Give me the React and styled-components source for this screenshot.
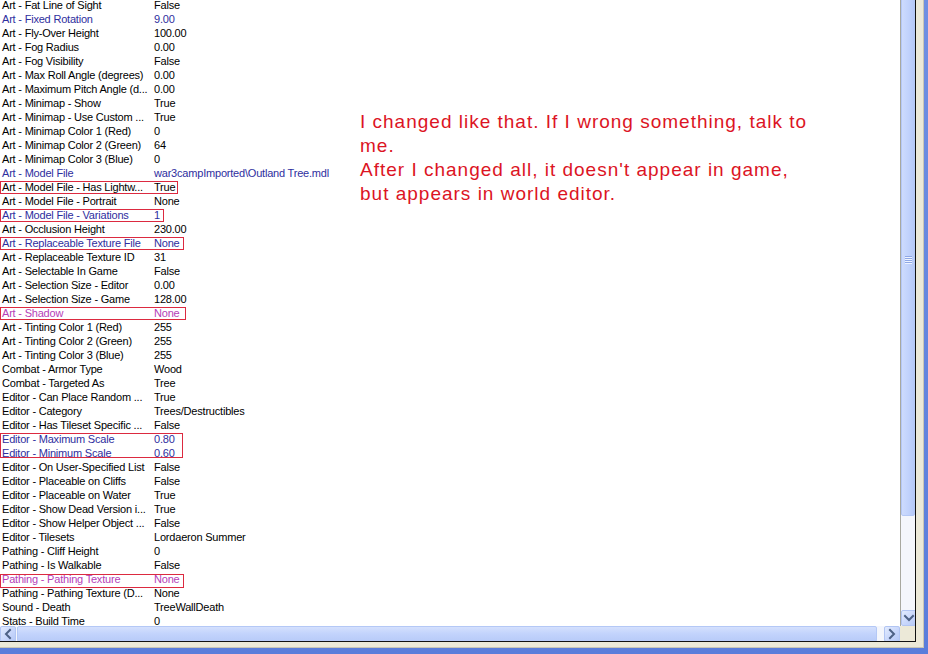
import React from 'react'
import styled, { createGlobalStyle } from 'styled-components'

const GlobalStyle = createGlobalStyle`
  html, body {
    margin: 0;
    padding: 0;
    background: #ffffff;
    overflow: hidden;
  }
`

const rows = [
  { label: 'Art - Fat Line of Sight', value: 'False' },
  { label: 'Art - Fixed Rotation', value: '9.00', tone: 'blue' },
  { label: 'Art - Fly-Over Height', value: '100.00' },
  { label: 'Art - Fog Radius', value: '0.00' },
  { label: 'Art - Fog Visibility', value: 'False' },
  { label: 'Art - Max Roll Angle (degrees)', value: '0.00' },
  { label: 'Art - Maximum Pitch Angle (d...', value: '0.00' },
  { label: 'Art - Minimap - Show', value: 'True' },
  { label: 'Art - Minimap - Use Custom ...', value: 'True' },
  { label: 'Art - Minimap Color 1 (Red)', value: '0' },
  { label: 'Art - Minimap Color 2 (Green)', value: '64' },
  { label: 'Art - Minimap Color 3 (Blue)', value: '0' },
  { label: 'Art - Model File', value: 'war3campImported\\Outland Tree.mdl', tone: 'blue' },
  { label: 'Art - Model File - Has Lightw...', value: 'True', mark: { w: 178, h: 13 } },
  { label: 'Art - Model File - Portrait', value: 'None' },
  { label: 'Art - Model File - Variations', value: '1', tone: 'blue', mark: { w: 164, h: 13 } },
  { label: 'Art - Occlusion Height', value: '230.00' },
  { label: 'Art - Replaceable Texture File', value: 'None', tone: 'blue', mark: { w: 184, h: 13 } },
  { label: 'Art - Replaceable Texture ID', value: '31' },
  { label: 'Art - Selectable In Game', value: 'False' },
  { label: 'Art - Selection Size - Editor', value: '0.00' },
  { label: 'Art - Selection Size - Game', value: '128.00' },
  { label: 'Art - Shadow', value: 'None', tone: 'purple', mark: { w: 186, h: 13 } },
  { label: 'Art - Tinting Color 1 (Red)', value: '255' },
  { label: 'Art - Tinting Color 2 (Green)', value: '255' },
  { label: 'Art - Tinting Color 3 (Blue)', value: '255' },
  { label: 'Combat - Armor Type', value: 'Wood' },
  { label: 'Combat - Targeted As', value: 'Tree' },
  { label: 'Editor - Can Place Random ...', value: 'True' },
  { label: 'Editor - Category', value: 'Trees/Destructibles' },
  { label: 'Editor - Has Tileset Specific ...', value: 'False' },
  { label: 'Editor - Maximum Scale', value: '0.80', tone: 'blue', mark: { w: 183, h: 25 } },
  { label: 'Editor - Minimum Scale', value: '0.60', tone: 'blue' },
  { label: 'Editor - On User-Specified List', value: 'False' },
  { label: 'Editor - Placeable on Cliffs', value: 'False' },
  { label: 'Editor - Placeable on Water', value: 'True' },
  { label: 'Editor - Show Dead Version i...', value: 'True' },
  { label: 'Editor - Show Helper Object ...', value: 'False' },
  { label: 'Editor - Tilesets', value: 'Lordaeron Summer' },
  { label: 'Pathing - Cliff Height', value: '0' },
  { label: 'Pathing - Is Walkable', value: 'False' },
  { label: 'Pathing - Pathing Texture', value: 'None', tone: 'purple', mark: { w: 184, h: 14, top: 2 } },
  { label: 'Pathing - Pathing Texture (D...', value: 'None' },
  { label: 'Sound - Death', value: 'TreeWallDeath' },
  { label: 'Stats - Build Time', value: '0' },
]

const tones = {
  blue: '#2e2e9e',
  purple: '#b540b8',
}

const Chevron = ({ dir }) => {
  const paths = {
    down: 'M3 5 L7 9 L11 5',
    left: 'M9 3 L5 7 L9 11',
    right: 'M5 3 L9 7 L5 11',
  }
  return (
    <svg width="14" height="14" viewBox="0 0 14 14">
      <path d={paths[dir]} fill="none" stroke="#4d6185" strokeWidth="2" strokeLinecap="square" />
    </svg>
  )
}

const App = () => {
  return (
    <>
      <GlobalStyle />
      <Window>
        <Client>
          <ListView>
            <Content>
              <PropertyList>
                {rows.map((r) => (
                  <Row key={r.label} $tone={r.tone} $mark={r.mark}>
                    <Label>{r.label}</Label>
                    <Value>{r.value}</Value>
                  </Row>
                ))}
              </PropertyList>
              <Note>
                I changed like that. If I wrong something, talk to me.
                <br />
                After I changed all, it doesn't appear in game, but appears in world editor.
              </Note>
            </Content>
            <VScroll>
              <VThumb>
                <Grip />
              </VThumb>
              <Track />
              <ScrollButton>
                <Chevron dir="down" />
              </ScrollButton>
            </VScroll>
            <HScroll>
              <ScrollButton>
                <Chevron dir="left" />
              </ScrollButton>
              <HThumb />
              <Track />
              <ScrollButton>
                <Chevron dir="right" />
              </ScrollButton>
            </HScroll>
            <Corner />
          </ListView>
        </Client>
      </Window>
    </>
  )
}

const Window = styled.div`
  width: 928px;
  height: 654px;
  display: flex;
  box-sizing: border-box;
  padding: 0 5px 6px 0;
  background: linear-gradient(180deg, #6f8fe2 0%, #5a7ddb 100%);
`

const Client = styled.div`
  flex: 1;
  display: flex;
  background: #ece9d8;
  padding: 0 7px 5px 0;
  border-right: 1px solid #c9c6b6;
  border-bottom: 1px solid #c9c6b6;
`

const ListView = styled.div`
  flex: 1;
  display: grid;
  grid-template-columns: 900px 15px;
  grid-template-rows: 626px 16px;
  background: #ffffff;
  border-right: 1px solid #111111;
  border-bottom: 1px solid #111111;
  overflow: hidden;
`

const Content = styled.div`
  display: flex;
  overflow: hidden;
  background: #ffffff;
`

const PropertyList = styled.div`
  width: 360px;
  flex-shrink: 0;
  margin-top: -2px;
  font-family: "Liberation Sans", Arial, sans-serif;
  font-size: 11px;
  letter-spacing: -0.2px;
`

const Row = styled.div`
  position: relative;
  display: flex;
  height: 14px;
  line-height: 14px;
  white-space: nowrap;
  color: ${(p) => tones[p.$tone] || '#000000'};

  ${(p) =>
    p.$mark &&
    `
    &::after {
      content: '';
      position: absolute;
      left: 0;
      top: ${p.$mark.top ?? 1}px;
      width: ${p.$mark.w}px;
      height: ${p.$mark.h}px;
      box-sizing: border-box;
      border: 1px solid #dc2a40;
      pointer-events: none;
      z-index: 1;
    }
  `}
`

const Label = styled.span`
  width: 152px;
  padding-left: 2px;
  flex-shrink: 0;
  overflow: hidden;
`

const Value = styled.span`
  padding-left: 0;
`

const Note = styled.div`
  width: 455px;
  padding-top: 110px;
  font-family: "Liberation Sans", Arial, sans-serif;
  font-size: 19px;
  letter-spacing: 1px;
  line-height: 24px;
  color: #dc1424;
`

const VScroll = styled.div`
  display: flex;
  flex-direction: column;
  border-left: 1px solid #a8a8a0;
  background: #f3f5fb;
`

const VThumb = styled.div`
  height: 520px;
  margin-top: -4px;
  box-sizing: border-box;
  border: 1px solid #b4c8f6;
  border-radius: 2px;
  background: linear-gradient(90deg, #cddbfd 0%, #c2d3fc 50%, #b6c9f8 100%);
  display: flex;
  align-items: center;
  justify-content: center;
`

const Grip = styled.div`
  width: 7px;
  height: 8px;
  margin-top: 8px;
  background: repeating-linear-gradient(180deg, #8ea7e6 0 1px, #eef3ff 1px 2px);
`

const Track = styled.div`
  flex: 1;
  background: #f4f6fc;
`

const ScrollButton = styled.div`
  width: 16px;
  height: 16px;
  flex-shrink: 0;
  box-sizing: border-box;
  border: 1px solid #b2c5f3;
  border-radius: 2px;
  background: linear-gradient(135deg, #e2ebfe 0%, #c6d5fb 60%, #b5c8f6 100%);
  display: flex;
  align-items: center;
  justify-content: center;
`

const HScroll = styled.div`
  display: flex;
  background: #f4f6fc;
`

const HThumb = styled.div`
  width: 860px;
  margin-left: 1px;
  box-sizing: border-box;
  border: 1px solid #b4c8f6;
  border-radius: 2px;
  background: linear-gradient(180deg, #d4e0fd 0%, #c2d3fc 50%, #b8cbf8 100%);
`

const Corner = styled.div`
  background: #ece9d8;
`

export default App
